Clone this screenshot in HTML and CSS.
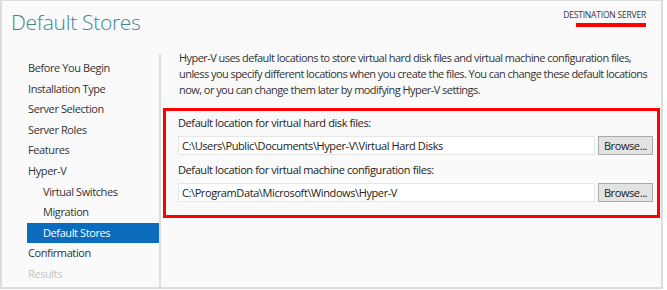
FILE: index.html
```html
<!DOCTYPE html>
<html>
<head>
<meta charset="utf-8">
<link rel="stylesheet" href="styles.css">
</head>
<body>
<div class="window">
  <header class="header">
    <h1 class="title">Default Stores</h1>
    <div class="dest">
      <span class="dest-label">DESTINATION SERVER</span>
      <span class="dest-bar"></span>
    </div>
  </header>
  <div class="main">
    <nav class="nav">
      <div class="nav-item">Before You Begin</div>
      <div class="nav-item">Installation Type</div>
      <div class="nav-item">Server Selection</div>
      <div class="nav-item">Server Roles</div>
      <div class="nav-item">Features</div>
      <div class="nav-item">Hyper-V</div>
      <div class="nav-item sub">Virtual Switches</div>
      <div class="nav-item sub">Migration</div>
      <div class="nav-item sub active">Default Stores</div>
      <div class="nav-item">Confirmation</div>
      <div class="nav-item disabled">Results</div>
    </nav>
    <section class="content">
      <p class="desc">Hyper-V uses default locations to store virtual hard disk files and virtual machine configuration files, unless you specify different locations when you create the files. You can change these default locations now, or you can change them later by modifying Hyper-V settings.</p>
      <div class="highlight">
        <div class="field-label">Default location for virtual hard disk files:</div>
        <div class="field-row">
          <div class="input">C:\Users\Public\Documents\Hyper-V\Virtual Hard Disks</div>
          <div class="btn">Browse...</div>
        </div>
        <div class="field-label second">Default location for virtual machine configuration files:</div>
        <div class="field-row">
          <div class="input">C:\ProgramData\Microsoft\Windows\Hyper-V</div>
          <div class="btn">Browse...</div>
        </div>
      </div>
    </section>
  </div>
</div>
</body>
</html>
```
FILE: styles.css
```css
html, body {
  margin: 0;
  padding: 0;
  background: #ffffff;
}
body {
  font-family: "Open Sans", "Noto Sans", sans-serif;
  font-size: 11px;
  letter-spacing: -0.4px;
  color: #1e1e1e;
}
.window {
  box-sizing: border-box;
  width: 663px;
  height: 289px;
  background: #fafafa;
  border: 2px solid #dcdcdc;
  border-top-width: 1px;
  display: flex;
  flex-direction: column;
}
.header {
  height: 53px;
  display: flex;
  justify-content: space-between;
  align-items: flex-start;
  flex: none;
}
.title {
  margin: 7px 0 0 9px;
  font-family: "Open Sans", sans-serif;
  font-weight: 300;
  font-size: 21px;
  line-height: 28px;
  letter-spacing: -0.3px;
  color: #3f8596;
}
.dest {
  margin: 8px 15px 0 0;
  display: flex;
  flex-direction: column;
  align-items: flex-end;
}
.dest-label {
  font-size: 8.5px;
  line-height: 12px;
  letter-spacing: -0.2px;
  color: #333;
}
.dest-bar {
  display: block;
  width: 70px;
  height: 4px;
  margin-top: 2px;
  background: #ff0000;
}
.main {
  flex: 1;
  display: flex;
}
.nav {
  width: 132px;
  padding: 4px 0 0 25px;
  border-right: 2px solid #dedede;
  flex: none;
}
.nav-item {
  height: 20.6px;
  line-height: 20.6px;
  padding-left: 1px;
  color: #333;
  white-space: nowrap;
}
.nav-item.sub {
  padding-left: 16px;
}
.nav-item.active {
  background: #0b6bbd;
  color: #ffffff;
}
.nav-item.disabled {
  color: #c4c4c4;
}
.content {
  flex: 1;
  padding: 0 1px 0 2px;
}
.desc {
  margin: -4px 0 0 16px;
  padding-right: 8px;
  line-height: 16px;
  letter-spacing: -0.55px;
  color: #333;
}
.highlight {
  margin-top: 10px;
  border: 3px solid #ff0000;
  padding: 4px 4px 13px 12px;
}
.field-label {
  line-height: 16px;
  color: #222;
}
.field-label.second {
  margin-top: 7px;
}
.field-row {
  display: flex;
  gap: 3px;
  margin-top: 5px;
}
.input {
  flex: 1;
  height: 17px;
  line-height: 17px;
  border: 1px solid #e6e6e6;
  background: #ffffff;
  padding-left: 3px;
  color: #222;
}
.btn {
  box-sizing: border-box;
  width: 55px;
  height: 19px;
  line-height: 17px;
  text-align: center;
  border: 1px solid #a9a9a9;
  background: #e3e3e3;
  color: #222;
}
```
